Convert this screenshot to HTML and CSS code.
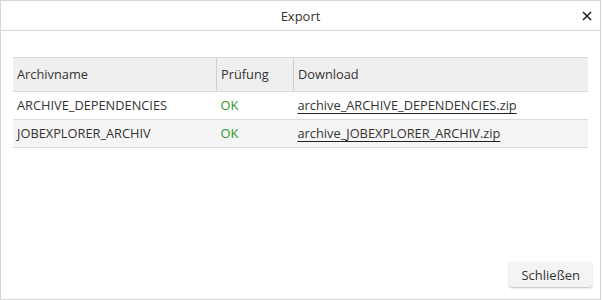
FILE: index.html
```html
<!DOCTYPE html>
<html lang="de">
<head>
    <meta charset="UTF-8">
    <title>Export</title>
    <link rel="stylesheet" href="styles.css">
</head>
<body>
    <div class="dialog">
        <!-- Title bar -->
        <div class="dialog-header">
            <span></span>
            <span class="dialog-title">Export</span>
            <button class="close-btn" type="button" aria-label="Schließen">
                <svg width="10" height="10" viewBox="0 0 10 10">
                    <path d="M1 1L9 9M9 1L1 9" stroke="#222" stroke-width="1.6" fill="none"/>
                </svg>
            </button>
        </div>

        <div class="dialog-body">
            <table class="export-table">
                <thead>
                    <tr>
                        <th class="col-name">Archivname</th>
                        <th class="col-check">Prüfung</th>
                        <th>Download</th>
                    </tr>
                </thead>
                <tbody>
                    <tr>
                        <td>ARCHIVE_DEPENDENCIES</td>
                        <td class="status-ok">OK</td>
                        <td><a href="#">archive_ARCHIVE_DEPENDENCIES.zip</a></td>
                    </tr>
                    <tr class="alt">
                        <td>JOBEXPLORER_ARCHIV</td>
                        <td class="status-ok">OK</td>
                        <td><a href="#">archive_JOBEXPLORER_ARCHIV.zip</a></td>
                    </tr>
                </tbody>
            </table>
        </div>

        <div class="dialog-footer">
            <button class="btn" type="button">Schließen</button>
        </div>
    </div>
</body>
</html>
```

FILE: styles.css
```css
/* General Page Styling */
body {
    margin: 0;
    padding: 0;
    font-family: "Open Sans", "Liberation Sans", sans-serif;
    font-size: 12.8px;
    color: #333;
    background-color: #fff;
}

.dialog {
    width: 601px;
    height: 300px;
    box-sizing: border-box;
    border: 1px solid #d6d6d6;
    display: flex;
    flex-direction: column;
    background-color: #fff;
}

/* Title bar */
.dialog-header {
    height: 29px;
    border-bottom: 1px solid #d6d6d6;
    display: grid;
    grid-template-columns: 1fr auto 1fr;
    align-items: center;
}

.dialog-title {
    font-size: 13px;
    color: #333;
}

.close-btn {
    justify-self: end;
    margin-right: 8px;
    width: 10px;
    height: 10px;
    padding: 0;
    border: none;
    background: none;
    display: flex;
    cursor: pointer;
}

/* Table */
.dialog-body {
    flex: 1;
    padding: 26px 12px 0 12px;
}

.export-table {
    width: 100%;
    border-collapse: collapse;
}

.export-table th {
    text-align: left;
    font-weight: normal;
    line-height: 19px;
    padding: 7px 4px;
    background-color: #efefef;
    border-top: 1px solid #dadada;
    border-bottom: 1px solid #dadada;
}

.export-table th + th {
    border-left: 1px solid #d0d0d0;
}

.col-name {
    width: 195px;
}

.col-check {
    width: 68px;
}

.export-table td {
    line-height: 19px;
    padding: 4px 4px;
    border-bottom: 1px solid #dadada;
}

.export-table tr.alt td {
    background-color: #f5f5f5;
}

.status-ok {
    color: #2a9a2a;
}

.export-table a {
    color: #333;
    text-decoration: underline;
    text-decoration-color: #222;
    text-underline-offset: 3px;
}

/* Footer */
.dialog-footer {
    display: flex;
    justify-content: flex-end;
    padding: 0 8px 12px 0;
}

.btn {
    height: 25px;
    padding: 0 12px;
    font-family: inherit;
    font-size: 13px;
    color: #333;
    background-color: #f4f4f4;
    border: none;
    border-radius: 3px;
    box-shadow: 0 1px 2px rgba(0, 0, 0, 0.25);
    cursor: pointer;
}
```
